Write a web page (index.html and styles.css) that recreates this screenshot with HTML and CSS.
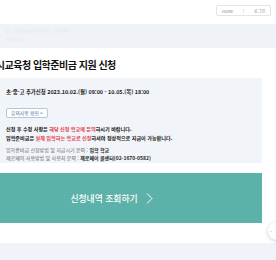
FILE: index.html
```html
<!DOCTYPE html>
<html lang="ko">
<head>
  <meta charset="UTF-8">
  <title>입학준비금 지원 신청</title>
  <link rel="stylesheet" href="styles.css">
</head>
<body>

  <header class="top">
    <div class="util">
      <a href="#">HOME</a>
      <span class="bar"></span>
      <a href="#">로그인</a>
    </div>
  </header>

  <div class="crumb">
    <p>홈 &gt; 입학준비금 지원 신청 &gt; 신청 안내</p>
    <p>신청 안내</p>
  </div>

  <main class="content">
    <h2 class="title">서울특별시교육청 입학준비금 지원 신청</h2>

    <section class="notice">
      <p class="period">초·중·고 추가신청 2023.10.02.(월) 09:00 - 10.05.(목) 18:00</p>
      <a href="#" class="btn-check">유의사항 확인 &gt;</a>
      <p class="strong">신청 후 수정 사항은 <em>해당 신청 학교에 문의</em>하시기 바랍니다.</p>
      <p class="strong">입학준비금은 <em>실제 입학하는 학교로 신청</em>하셔야 정상적으로 지급이 가능합니다.</p>
      <div class="contact">
        <p>입학준비금 신청방법 및 지급시기 문의 : <b>입학 학교</b></p>
        <p>제로페이 사용방법 및 사용처 문의 : <b>제로페이 콜센터(02-1670-0582)</b></p>
      </div>
    </section>

    <a href="#" class="btn-main"><span>신청내역 조회하기</span><svg width="7" height="11" viewBox="0 0 7 11"><path d="M1 0.5 L6 5.5 L1 10.5" fill="none" stroke="#fff" stroke-width="1"/></svg></a>
  </main>

  <footer class="foot"></footer>

  <button class="float">·</button>

</body>
</html>
```

FILE: styles.css
```css
body {
  margin: 0;
  font-family: "Noto Sans CJK KR", "Noto Sans", sans-serif;
  background: #fff;
  color: #222;
  overflow: hidden;
  height: 260px;
}
p {
  margin: 0;
}
a {
  text-decoration: none;
}
.top {
  height: 24px;
  display: flex;
  justify-content: flex-end;
  align-items: flex-start;
  padding-right: 5px;
}
.util {
  margin-top: 5px;
  height: 11px;
  width: 55px;
  box-sizing: border-box;
  border: 1px solid #e2e4e8;
  border-radius: 2px;
  display: flex;
  align-items: center;
  justify-content: space-around;
  font-size: 4px;
}
.util a {
  color: #888;
}
.util .bar {
  width: 1px;
  height: 4px;
  background: #e2e4e8;
}
.crumb {
  height: 24px;
  background: #eff2f6;
  padding: 3px 6px;
  box-sizing: border-box;
  font-size: 4px;
  color: #e6e9ee;
  line-height: 9px;
}
.content {
  margin: 0 14px 0 -20px;
}
.title {
  margin: 0;
  padding-top: 11px;
  height: 30px;
  box-sizing: border-box;
  font-size: 10px;
  font-weight: 700;
  letter-spacing: -0.5px;
  line-height: 12px;
  white-space: nowrap;
  color: #111;
  margin-left: -19px;
}
.notice {
  background: #f1f4f8;
  padding: 10px 10px 8px 26px;
  height: 85px;
  box-sizing: border-box;
}
.period {
  font-size: 5.4px;
  font-weight: 700;
  color: #222;
  line-height: 8px;
}
.btn-check {
  display: inline-block;
  margin-top: 4px;
  height: 10px;
  line-height: 8px;
  padding: 0 4px;
  box-sizing: border-box;
  border: 1px solid #b9c6da;
  border-radius: 2px;
  background: #fff;
  font-size: 4.8px;
  color: #4f6d9c;
}
.strong {
  font-size: 5.1px;
  font-weight: 700;
  color: #111;
  line-height: 9px;
}
.notice .btn-check + .strong {
  margin-top: 4px;
}
.strong em {
  font-style: normal;
  color: #e2434d;
}
.contact {
  margin-top: 4px;
  font-size: 5px;
  color: #666;
  line-height: 8px;
}
.contact b {
  color: #222;
}
.btn-main {
  margin-top: 10px;
  height: 50px;
  background: #5cb1a8;
  color: #fff;
  font-size: 8.8px;
  font-weight: 500;
  display: flex;
  align-items: center;
  justify-content: center;
  gap: 8px;
  padding-right: 19px;
}
.foot {
  margin-top: 20px;
  height: 17px;
  background: #f0f3f7;
}
.float {
  position: fixed;
  right: -10px;
  top: 222px;
  width: 18px;
  height: 18px;
  border: 0;
  border-radius: 50%;
  background: #fff;
  box-shadow: 0 1px 4px rgba(0, 0, 0, 0.2);
  font-size: 6px;
  padding: 0 0 0 2px;
  text-align: left;
  color: #333;
}
```
